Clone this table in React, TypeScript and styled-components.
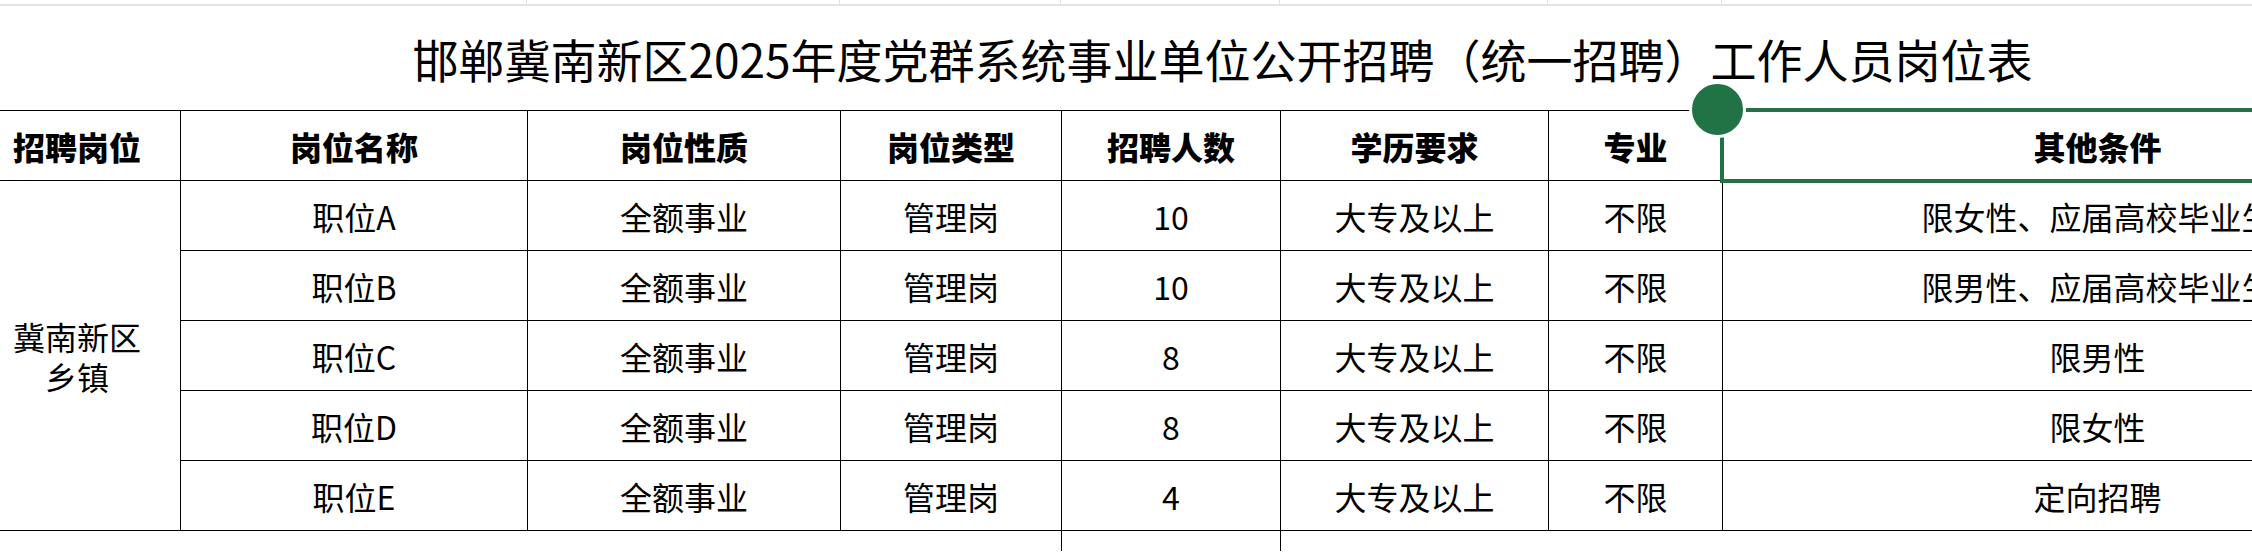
import React from 'react';
import styled, { createGlobalStyle } from 'styled-components';

const GlobalStyle = createGlobalStyle`
  html, body {
    margin: 0;
    padding: 0;
    background: #ffffff;
    overflow: hidden;
  }
  body {
    font-family: "Noto Sans CJK SC", "Noto Sans", sans-serif;
    color: #000000;
  }
`;

// column widths, the sheet starts 27px left of the window
const COLUMNS = [207, 347, 313, 221, 219, 268, 174, 750];
const GREEN = '#217346';

const Sheet = styled.div`
  width: ${COLUMNS.reduce((a, b) => a + b, 0)}px;
  margin-left: -27px;
`;

const GridStrip = styled.div`
  display: grid;
  grid-template-columns: ${COLUMNS.map((w) => `${w}px`).join(' ')};
  height: 6px;
  border-bottom: 2px solid #e3e3e3;
  box-sizing: border-box;
`;

const GridTick = styled.div<{ $tick: boolean }>`
  border-right: ${({ $tick }) => ($tick ? '1px solid #e3e3e3' : 'none')};
`;

const Title = styled.div`
  height: 104px;
  display: flex;
  align-items: center;
  justify-content: center;
  font-size: 46px;
  font-weight: 400;
  letter-spacing: 0;
`;

const Table = styled.table`
  border-collapse: collapse;
  table-layout: fixed;
  width: 100%;
`;

const HeadCell = styled.th`
  position: relative;
  height: 69px;
  padding: 0;
  border: 1px solid #000;
  font-size: 32px;
  font-weight: 900;
  text-align: center;
  vertical-align: middle;
`;

const Cell = styled.td`
  height: 69px;
  padding: 0;
  border: 1px solid #000;
  font-size: 32px;
  font-weight: 400;
  text-align: center;
  vertical-align: middle;
  white-space: nowrap;
  overflow: hidden;
`;

const GroupCell = styled(Cell)`
  line-height: 40px;
  white-space: normal;
`;

const TailCell = styled.td<{ $edged: boolean }>`
  height: 20px;
  padding: 0;
  border: none;
  border-left: ${({ $edged }) => ($edged ? '1px solid #000' : 'none')};
  border-right: ${({ $edged }) => ($edged ? '1px solid #000' : 'none')};
`;

const Selection = styled.div`
  position: absolute;
  top: -3px;
  left: -3px;
  right: -3px;
  bottom: -3px;
  border: 4px solid ${GREEN};
  pointer-events: none;
`;

const Handle = styled.div`
  position: absolute;
  left: -35px;
  top: -31px;
  width: 51px;
  height: 51px;
  border: 3px solid #ffffff;
  border-radius: 50%;
  background: ${GREEN};
`;

const headers = ['招聘岗位', '岗位名称', '岗位性质', '岗位类型', '招聘人数', '学历要求', '专业', '其他条件'];

const rows = [
  { name: '职位A', count: 10, other: '限女性、应届高校毕业生' },
  { name: '职位B', count: 10, other: '限男性、应届高校毕业生' },
  { name: '职位C', count: 8, other: '限男性' },
  { name: '职位D', count: 8, other: '限女性' },
  { name: '职位E', count: 4, other: '定向招聘' },
];

const App = () => {
  return (
    <>
      <GlobalStyle />
      <Sheet>
        <GridStrip>
          {COLUMNS.map((w, i) => (
            <GridTick key={i} $tick={i >= 1 && i <= 6} />
          ))}
        </GridStrip>
        <Title>邯郸冀南新区2025年度党群系统事业单位公开招聘（统一招聘）工作人员岗位表</Title>
        <Table>
          <colgroup>
            {COLUMNS.map((w, i) => (
              <col key={i} style={{ width: w }} />
            ))}
          </colgroup>
          <thead>
            <tr>
              {headers.map((h, i) => (
                <HeadCell key={h}>
                  {h}
                  {i === headers.length - 1 && (
                    <Selection>
                      <Handle />
                    </Selection>
                  )}
                </HeadCell>
              ))}
            </tr>
          </thead>
          <tbody>
            {rows.map((row, i) => (
              <tr key={row.name}>
                {i === 0 && (
                  <GroupCell rowSpan={rows.length}>
                    冀南新区
                    <br />
                    乡镇
                  </GroupCell>
                )}
                <Cell>{row.name}</Cell>
                <Cell>全额事业</Cell>
                <Cell>管理岗</Cell>
                <Cell>{row.count}</Cell>
                <Cell>大专及以上</Cell>
                <Cell>不限</Cell>
                <Cell>{row.other}</Cell>
              </tr>
            ))}
            <tr>
              {COLUMNS.map((w, i) => (
                <TailCell key={i} $edged={i === 4} />
              ))}
            </tr>
          </tbody>
        </Table>
      </Sheet>
    </>
  );
};

export default App;
